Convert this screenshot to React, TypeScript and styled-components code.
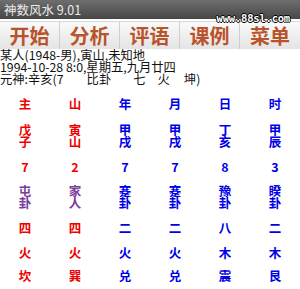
import React from "react";
import styled, { createGlobalStyle } from "styled-components";

const Global = createGlobalStyle`
  html, body { margin: 0; padding: 0; background: #ffffff; }
  body { font-family: "Noto Sans CJK SC", "Noto Sans", sans-serif; }
`;

const Screen = styled.div`
  position: relative;
  width: 300px;
  height: 289px;
  overflow: hidden;
  background: #ffffff;
`;

const TitleBar = styled.div`
  height: 19px;
  background: linear-gradient(#6e6e6e, #474747);
  color: #ececec;
  font-size: 12.5px;
  line-height: 19px;
  padding-left: 4px;
`;

const Watermark = styled.div`
  position: absolute;
  top: 13px;
  right: 10px;
  font-family: "DejaVu Sans Mono", "Liberation Mono", monospace;
  font-weight: bold;
  font-size: 10.5px;
  line-height: 11px;
  color: #ffffff;
  text-shadow: 1px 0 0 #000, -1px 0 0 #000, 0 1px 0 #000, 0 -1px 0 #000;
  letter-spacing: -0.2px;
`;

const ButtonBar = styled.div`
  display: flex;
  height: 27px;
  margin-top: 2px;
  background: linear-gradient(#fafafa, #e4e4e4);
  border-top: 1px solid #d8d8d8;
`;

const MenuButton = styled.div<{ $last?: boolean }>`
  width: 60px;
  display: flex;
  align-items: center;
  justify-content: center;
  font-size: 20px;
  font-weight: bold;
  color: #b9532b;
  border-right: ${(p) => (p.$last ? "none" : "1px solid #cfcfcf")};
  box-sizing: border-box;
`;

const Info = styled.div`
  font-size: 12.3px;
  line-height: 12px;
  color: #111111;
  white-space: nowrap;
`;

const InfoLine = styled.div`
  height: 12px;
`;

const Gap = styled.span<{ $w: number }>`
  display: inline-block;
  width: ${(p) => p.$w}px;
`;

const Grid = styled.div`
  margin-top: 7px;
  display: flex;
  flex-direction: column;
`;

const Row = styled.div<{ $h: number }>`
  display: flex;
  height: ${(p) => p.$h}px;
  align-items: center;
`;

const Cell = styled.div<{ $color: string }>`
  width: 50px;
  text-align: center;
  color: ${(p) => p.$color};
  font-weight: bold;
  font-size: 12.5px;
  line-height: 12px;
`;

const Stack = styled.div`
  display: flex;
  flex-direction: column;
  align-items: center;
  gap: 0.5px;
`;

const RED = "#f00000";
const BLUE = "#0000e8";
const PURPLE = "#7a3c98";

const buttons = ["开始", "分析", "评语", "课例", "菜单"];

type RowDef = { h: number; cells: string[]; colors: string[] };

const std = [RED, RED, BLUE, BLUE, BLUE, BLUE];
const rows: RowDef[] = [
  { h: 24, cells: ["主", "山", "年", "月", "日", "时"], colors: std },
  { h: 40, cells: ["戊子", "寅山", "甲戌", "甲戌", "丁亥", "甲辰"], colors: std },
  { h: 22, cells: ["7", "2", "7", "7", "8", "3"], colors: std },
  { h: 38, cells: ["屯卦", "家人", "蹇卦", "蹇卦", "豫卦", "睽卦"], colors: [PURPLE, PURPLE, BLUE, BLUE, BLUE, BLUE] },
  { h: 24, cells: ["四", "四", "二", "二", "八", "二"], colors: std },
  { h: 25, cells: ["火", "火", "火", "火", "木", "木"], colors: std },
  { h: 22, cells: ["坎", "巽", "兑", "兑", "震", "艮"], colors: std },
];

export default function App() {
  return (
    <Screen>
      <Global />
      <TitleBar>神数风水 9.01</TitleBar>
      <Watermark>www.88sl.com</Watermark>
      <ButtonBar>
        {buttons.map((b, i) => (
          <MenuButton key={b} $last={i === buttons.length - 1}>
            {b}
          </MenuButton>
        ))}
      </ButtonBar>
      <Info>
        <InfoLine>某人(1948-男),寅山,未知地</InfoLine>
        <InfoLine>1994-10-28 8:0,星期五,九月廿四</InfoLine>
        <InfoLine>
          元神:辛亥(7<Gap $w={23} />比卦<Gap $w={22} />七<Gap $w={12} />火<Gap $w={14} />坤)
        </InfoLine>
      </Info>
      <Grid>
        {rows.map((r, ri) => (
          <Row key={ri} $h={r.h}>
            {r.cells.map((c, ci) => (
              <Cell key={ci} $color={r.colors[ci]}>
                {c.length === 2 && !/\d/.test(c) ? (
                  <Stack>
                    <span>{c[0]}</span>
                    <span>{c[1]}</span>
                  </Stack>
                ) : (
                  c
                )}
              </Cell>
            ))}
          </Row>
        ))}
      </Grid>
    </Screen>
  );
}
